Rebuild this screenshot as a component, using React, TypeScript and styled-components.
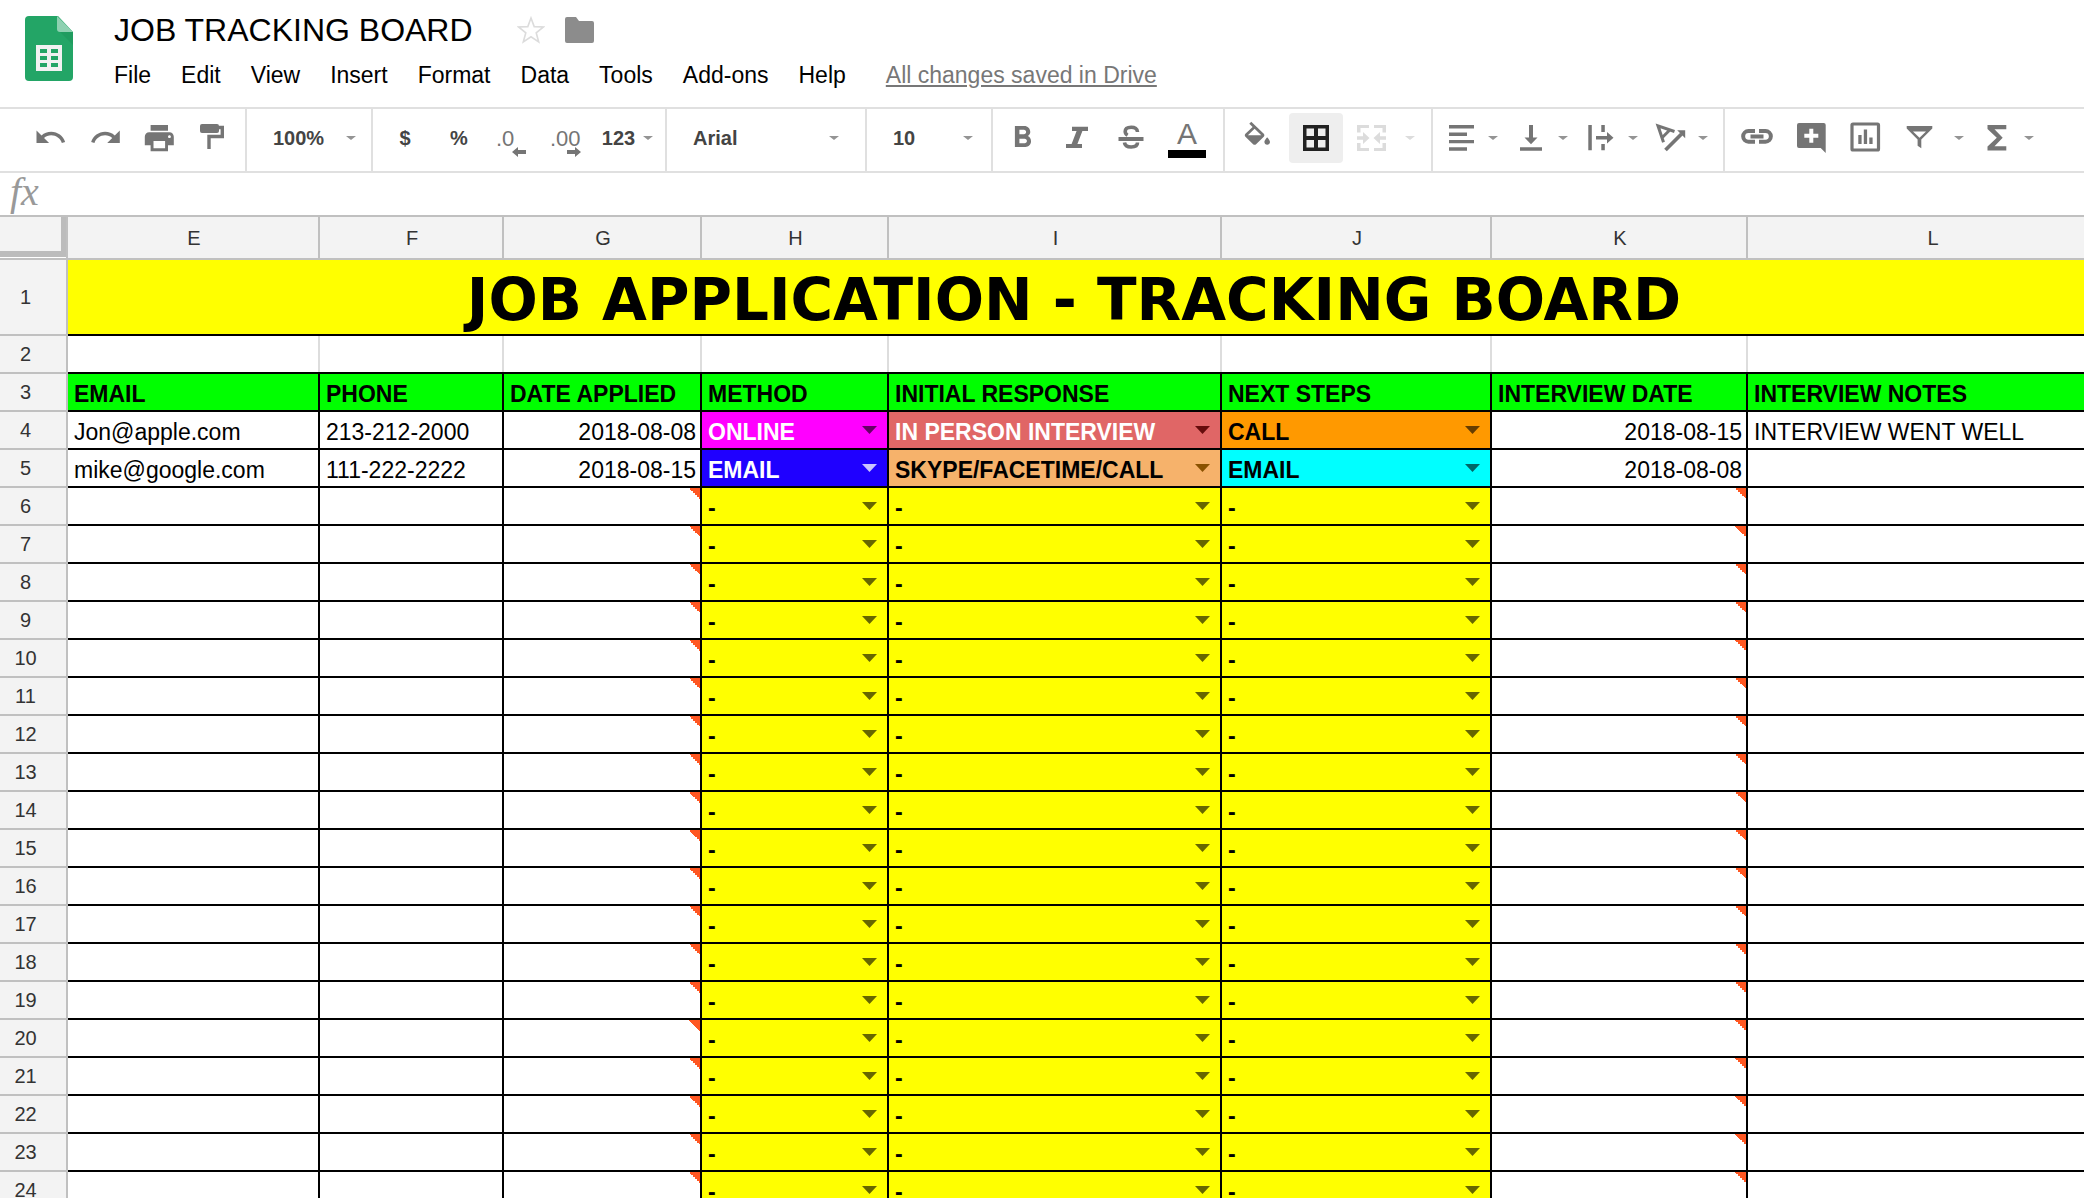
import React from "react";
import styled, { createGlobalStyle } from "styled-components";

const GlobalStyle = createGlobalStyle`
  *, *::before, *::after { box-sizing: border-box; }
  body {
    margin: 0;
    background: #fff;
    color: #000;
    font-family: "Liberation Sans", Arial, sans-serif;
  }
  button, select, input { font: inherit; color: inherit; border: 0; margin: 0; padding: 0; background: none; border-radius: 0; }
`;

const Page = styled.div`
  display: flex;
  flex-direction: column;
  height: 100vh;
  overflow: hidden;
`;

/* ---------- Title area ---------- */

const Header = styled.header`
  display: flex;
  align-items: flex-start;
  gap: 40px;
  height: 107px;
  padding: 10px 24px 0;
`;

const LogoLink = styled.a`
  display: block;
  padding-top: 6px;
  line-height: 0;
`;

const HeaderText = styled.div`
  display: flex;
  flex-direction: column;
  gap: 9px;
`;

const TitleRow = styled.div`
  display: flex;
  align-items: center;
  gap: 20px;
`;

const DocTitle = styled.h1`
  margin: 0 24px 0 0;
  font-size: 32px;
  line-height: 40px;
  font-weight: 400;
`;

const PlainButton = styled.button`
  display: flex;
  line-height: 0;
`;

const MenuBar = styled.nav`
  display: flex;
  align-items: center;
  gap: 30px;
  line-height: 32px;
  font-size: 23px;
`;

const MenuButton = styled.button`
  line-height: 32px;
`;

const SaveLink = styled.a`
  margin-left: 10px;
  color: #777;
`;

/* ---------- Toolbar ---------- */

const Toolbar = styled.div`
  display: flex;
  height: 66px;
  border-top: 2px solid #e0e0e0;
  border-bottom: 2px solid #e0e0e0;
  color: #757575;
`;

const Group = styled.div<{ $start: number; $end?: number; $last?: boolean }>`
  display: flex;
  align-items: flex-start;
  padding: 4px ${(p) => p.$end ?? 0}px 0 ${(p) => p.$start}px;
  border-right: ${(p) => (p.$last ? "0" : "2px solid #e0e0e0")};
`;

const ToolButton = styled.button<{ $active?: boolean; $faded?: boolean; $wide?: number }>`
  display: flex;
  align-items: center;
  justify-content: center;
  width: ${(p) => p.$wide ?? 54}px;
  height: 50px;
  border-radius: 4px;
  background: ${(p) => (p.$active ? "#eee" : "transparent")};
  color: ${(p) => (p.$active ? "#212121" : p.$faded ? "#dcdcdc" : "#757575")};
`;

const DropButton = styled(ToolButton)`
  width: 70px;
  justify-content: flex-start;
  gap: 9px;
  padding-left: 3px;
`;

const TextTool = styled(ToolButton)`
  font-size: 20px;
  font-weight: 700;
  color: #444;
  gap: 8px;
`;

const Spacer = styled.span`
  width: 4px;
`;

const DecimalBox = styled.span`
  display: grid;
  width: 30px;
  margin-right: 4px;
  padding-top: 10px;
  font-size: 22px;
  line-height: 20px;
  text-align: left;

  svg { justify-self: end; margin-top: -2px; }
`;

const ColorBox = styled.span`
  display: grid;
  justify-items: center;
  gap: 3px;
  padding-top: 3px;
  font-size: 30px;
  line-height: 26px;
`;

const ColorBar = styled.span`
  width: 38px;
  height: 8px;
  background: #000;
`;

const SelectBox = styled.label<{ $width: number; $caretGap: number }>`
  display: grid;
  align-items: center;
  width: ${(p) => p.$width}px;
  height: 50px;
  padding-right: ${(p) => p.$caretGap}px;

  > * { grid-area: 1 / 1; }
  > svg { justify-self: end; pointer-events: none; }
`;

const ToolSelect = styled.select`
  appearance: none;
  width: 100%;
  padding-left: 26px;
  font-size: 20px;
  font-weight: 700;
  color: #444;
`;

/* ---------- Formula bar ---------- */

const FormulaBar = styled.div`
  display: flex;
  align-items: flex-start;
  gap: 14px;
  height: 42px;
  padding-left: 10px;
`;

const FormulaLabel = styled.label`
  font-family: "Liberation Serif", serif;
  font-style: italic;
  font-size: 40px;
  line-height: 38px;
  color: #999;
`;

const FormulaInput = styled.input`
  flex: 1;
  height: 40px;
  font-size: 23px;
  outline: none;
`;

/* ---------- Sheet ---------- */

const SheetArea = styled.main`
  flex: 1;
  min-height: 0;
  overflow: hidden;
  border-top: 2px solid #c0c0c0;
`;

const Sheet = styled.table`
  width: max(100%, 2118px);
  table-layout: fixed;
  border-collapse: separate;
  border-spacing: 0;
`;

const Corner = styled.th`
  padding: 0;
  vertical-align: top;
  background: #fff;
  border-right: 2px solid #c0c0c0;
  border-bottom: 2px solid #c0c0c0;
`;

const CornerHandle = styled.div`
  height: 40px;
  background: #f3f3f3;
  border-right: 5px solid #bcbcbc;
  border-bottom: 6px solid #bcbcbc;
`;

const ColumnHead = styled.th`
  height: 43px;
  padding: 0 0 0 2px;
  background: #f3f3f3;
  border-right: 2px solid #c0c0c0;
  border-bottom: 2px solid #c0c0c0;
  font-size: 20px;
  line-height: 24px;
  font-weight: 400;
  color: #333;
`;

const RowHead = styled.th`
  padding: 0 15px 0 0;
  background: #f3f3f3;
  border-right: 2px solid #c0c0c0;
  border-bottom: 2px solid #c0c0c0;
  font-size: 20px;
  line-height: 24px;
  font-weight: 400;
  color: #333;
`;

const Banner = styled.td`
  height: 76px;
  padding: 6px 38px 0 0;
  background: #ff0;
  border-bottom: 2px solid #000;
  font-family: "DejaVu Sans", Verdana, sans-serif;
  font-size: 58px;
  line-height: 60px;
  font-weight: 700;
  text-align: center;
`;

const Cell = styled.td<{ $right?: boolean; $note?: boolean }>`
  height: 38px;
  padding: 4px 4px 0 6px;
  border-right: 2px solid #000;
  border-bottom: 2px solid #000;
  font-size: 23px;
  line-height: 28px;
  white-space: nowrap;
  overflow: hidden;
  text-align: ${(p) => (p.$right ? "right" : "left")};
  ${(p) => p.$note && "background: linear-gradient(to bottom left, #ff5722 50%, transparent 50%) top right / 11px 11px no-repeat;"}
`;

const BlankCell = styled(Cell)`
  border-right: 0;
  box-shadow: inset -2px 0 #ddd;
`;

const FieldCell = styled(Cell)`
  background: #0f0;
  font-weight: 700;
`;

const ChoiceCell = styled(Cell)<{ $bg: string; $ink: string }>`
  padding: 0;
  background: ${(p) => p.$bg};
  color: ${(p) => p.$ink};
`;

const Choice = styled.label`
  display: grid;
  align-items: center;
  height: 36px;
  padding-right: 10px;

  > * { grid-area: 1 / 1; }
  > svg { justify-self: end; pointer-events: none; }
`;

const ChoiceSelect = styled.select`
  appearance: none;
  width: 100%;
  height: 36px;
  padding: 4px 0 0 6px;
  font-size: 23px;
  font-weight: 700;
`;

/* ---------- Icons ---------- */

const Icon = ({ children }: { children: React.ReactNode }) => (
  <svg width="36" height="36" viewBox="0 0 36 36" fill="currentColor" aria-hidden="true">
    {children}
  </svg>
);

const Caret = ({ faded }: { faded?: boolean }) => (
  <svg width="10" height="4" viewBox="0 0 10 4" fill={faded ? "#dcdcdc" : "#949494"} aria-hidden="true">
    <path d="M0 0h10L5 4z" />
  </svg>
);

const CellCaret = ({ color }: { color: string }) => (
  <svg width="15" height="8" viewBox="0 0 15 8" fill={color} aria-hidden="true">
    <path d="M0 0h15L7.500 8z" />
  </svg>
);

const SheetsLogo = () => (
  <svg width="50" height="66" viewBox="0 0 50 66" aria-hidden="true">
    <path d="M5 0h29l15 16v45a4 4 0 0 1-4 4H5a4 4 0 0 1-4-4V4a4 4 0 0 1 4-4z" fill="#23a566" />
    <path d="M33 0l16 16H36a3 3 0 0 1-3-3z" fill="#8ed1b1" />
    <path d="M36 16h13v13z" fill="#1c9457" opacity="0.5" />
    <path
      d="M12 29h26v26H12zM16 33v4h7v-4zm11 0v4h7v-4zM16 40v4h7v-4zm11 0v4h7v-4zM16 47v4h7v-4zm11 0v4h7v-4z"
      fill="#f1f1f1"
      fillRule="evenodd"
    />
  </svg>
);

const Star = () => (
  <svg width="28" height="30" viewBox="0 0 28 30" fill="none" stroke="#dcdcdc" strokeWidth="1.6" aria-hidden="true">
    <path d="M14 3l3.200 8.600 9.300.4-7.300 5.800 2.500 9.200-7.700-5.200L6.300 27l2.500-9.200L1.500 12l9.300-.4z" />
  </svg>
);

const Folder = () => (
  <svg width="30" height="26" viewBox="0 0 30 26" fill="#8c8c8c" aria-hidden="true">
    <path d="M2 0h9l3 4h13a2 2 0 0 1 2 2v18a2 2 0 0 1-2 2H2a2 2 0 0 1-2-2V2a2 2 0 0 1 2-2z" />
  </svg>
);

const Undo = () => (
  <Icon>
    <path transform="translate(.7 .6) scale(1.4)" d="M12.500 8c-2.650 0-5.050.99-6.900 2.600L2 7v9h9l-3.620-3.620c1.390-1.160 3.160-1.880 5.120-1.880 3.540 0 6.550 2.310 7.600 5.500l2.370-.78C21.080 11.030 17.150 8 12.500 8z" />
  </Icon>
);
const Redo = () => (
  <Icon>
    <path transform="translate(2 .6) scale(1.4)" d="M18.400 10.600C16.550 8.990 14.150 8 11.500 8c-4.650 0-8.580 3.030-9.960 7.220L3.900 16c1.050-3.190 4.050-5.500 7.600-5.500 1.950 0 3.730.72 5.120 1.880L13 16h9V7l-3.600 3.600z" />
  </Icon>
);
const Print = () => (
  <Icon>
    <path transform="translate(.9 .7) scale(1.45)" d="M19 8H5c-1.660 0-3 1.340-3 3v6h4v4h12v-4h4v-6c0-1.660-1.340-3-3-3zm-3 11H8v-5h8v5zm3-7c-.55 0-1-.45-1-1s.45-1 1-1 1 .45 1 1-.45 1-1 1zm-1-9H6v4h12V3z" />
  </Icon>
);
const Paint = () => (
  <Icon>
    <rect x="5" y="4" width="19" height="9" rx="2" />
    <path d="M24 7.500h3.300v9H14V29" fill="none" stroke="currentColor" strokeWidth="3.400" />
  </Icon>
);
const Bold = () => (
  <Icon>
    <path transform="translate(-.6 -1.600) scale(1.500)" d="M15.600 11.790c.97-.67 1.650-1.770 1.650-2.790 0-2.260-1.750-4-4-4H7v14h7.040c2.090 0 3.710-1.700 3.710-3.790 0-1.520-.86-2.820-2.150-3.420zM10 7.500h3c.83 0 1.500.67 1.500 1.500s-.67 1.500-1.500 1.500h-3v-3zm3.500 9H10v-3h3.500c.83 0 1.500.67 1.500 1.500s-.67 1.500-1.500 1.500z" />
  </Icon>
);
const Italic = () => (
  <Icon>
    <path d="M13 6.700h16V11h-5.600l-5 13H23v4H7v-4h5.600l5-13H13z" />
  </Icon>
);
const Strike = () => (
  <Icon>
    <path d="M5.500 17h25v4h-25z" />
    <path
      d="M24.500 12c0-3.200-2.600-4.700-6.300-4.700-3.800 0-6 1.700-6 4.200 0 1.800 1 2.900 2.400 3.700M11.500 22.500c.3 3 2.800 4.500 6.700 4.500 3.800 0 6.300-1.500 6.300-4.400"
      fill="none"
      stroke="currentColor"
      strokeWidth="3.600"
    />
  </Icon>
);
const Bucket = () => (
  <Icon>
    <path transform="translate(.6 1.800) scale(1.400 1.350)" d="M16.560 8.940L7.620 0 6.210 1.410l2.380 2.380-5.150 5.150c-.59.59-.59 1.540 0 2.120l5.500 5.500c.29.29.68.44 1.060.44s.77-.15 1.060-.44l5.500-5.500c.59-.58.59-1.530 0-2.120zM5.210 10L10 5.210 14.790 10H5.210zM19 11.500s-2 2.170-2 3.500c0 1.100.9 2 2 2s2-.9 2-2c0-1.330-2-3.500-2-3.500z" />
  </Icon>
);
const Borders = () => (
  <Icon>
    <path fillRule="evenodd" d="M5 5h26v26H5zM8.500 8.500v7.500H16V8.500zm11.500 0v7.500h7.500V8.500zM8.500 20v7.500H16V20zM20 20v7.500h7.500V20z" />
  </Icon>
);
const Merge = () => (
  <Icon>
    <path d="M5 5h12v3H8.500v4.500H5zM22 5h12v7.500h-3.500V8H22zM5 23h3.500v5H17v3H5zM30.500 23H34v8H22v-3h8.500z" />
    <path d="M5 16.200h6V12l6.500 6-6.500 6v-4.200H5zM34 16.200h-6V12l-6.500 6 6.500 6v-4.200h6z" />
  </Icon>
);
const AlignLeft = () => (
  <Icon>
    <path d="M6 5h25v3.500H6zM6 12.500h18V16H6zM6 20h25v3.300H6zM6 27.300h18v3.400H6z" />
  </Icon>
);
const AlignBottom = () => (
  <Icon>
    <path d="M16 5h4v12.500h4.500L18 24.300l-6.500-6.800H16zM7 27.300h22v3.400H7z" />
  </Icon>
);
const Wrap = () => (
  <Icon>
    <path d="M5.300 5h3.500v25.300H5.300zM18.300 5h3.500v7h-3.500zM18.300 24h3.500v6.300h-3.500zM13 16h11v-4l6.500 5.800-6.500 5.800v-4H13z" />
  </Icon>
);
const Rotate = () => (
  <Icon>
    <path d="M21.500 11.500L5 5.800l5.500 16.400M17 9.800L9.300 17.500" fill="none" stroke="currentColor" strokeWidth="3" />
    <path d="M12.500 30L28.500 14" fill="none" stroke="currentColor" strokeWidth="3.800" />
    <path d="M32.200 10.200v8l-8-8z" />
  </Icon>
);
const LinkIcon = () => (
  <Icon>
    <path
      d="M16 11H9.500a5.300 5.300 0 0 0 0 10.700H16M20 11h6.500a5.300 5.300 0 0 1 0 10.700H20M11.500 16.400h13"
      fill="none"
      stroke="currentColor"
      strokeWidth="4"
    />
  </Icon>
);
const Comment = () => (
  <Icon>
    <path d="M6 3h24.700a2 2 0 0 1 2 2v28l-5-5H6a2 2 0 0 1-2-2V5a2 2 0 0 1 2-2z" />
    <path d="M16.300 8.800h4v5h5v4h-5v5h-4v-5h-5v-4h5z" fill="#fff" />
  </Icon>
);
const Chart = () => (
  <Icon>
    <rect x="5" y="4" width="26.500" height="26" rx="1" fill="none" stroke="currentColor" strokeWidth="3.200" />
    <path d="M11.300 15h3.300v9h-3.300zM16.800 9.500h3.300V24h-3.300zM22.300 17.500h3.300V24h-3.300z" />
  </Icon>
);
const Funnel = () => (
  <Icon>
    <path fillRule="evenodd" d="M5.700 6h25.600v2.500L20.300 19.500v8.800l-3.700-2.500v-6.300L5.700 8.500zM12 11.500l6.500 6.300 6.500-6.300z" />
  </Icon>
);
const Sigma = () => (
  <Icon>
    <path d="M27.300 5H8.500v4l9.300 8.800L8.500 26.500v4h18.800v-4.300H15.500l8.200-8.400-8.200-8.500h11.800z" />
  </Icon>
);
const DecimalArrow = ({ right }: { right?: boolean }) => (
  <svg width="14" height="10" viewBox="0 0 14 10" fill="currentColor" aria-hidden="true">
    <path d={right ? "M0 3h8V0l6 5-6 5V7H0z" : "M14 3H6V0L0 5l6 5V7h8z"} />
  </svg>
);

/* ---------- Data ---------- */

const MENUS = ["File", "Edit", "View", "Insert", "Format", "Data", "Tools", "Add-ons", "Help"];
const COLUMNS = [
  { id: "E", width: 252, field: "EMAIL" },
  { id: "F", width: 184, field: "PHONE" },
  { id: "G", width: 198, field: "DATE APPLIED" },
  { id: "H", width: 187, field: "METHOD" },
  { id: "I", width: 333, field: "INITIAL RESPONSE" },
  { id: "J", width: 270, field: "NEXT STEPS" },
  { id: "K", width: 256, field: "INTERVIEW DATE" },
  { id: "L", width: 0, field: "INTERVIEW NOTES" },
];

type Pick = { value: string; bg: string; ink: string; caret: string };
type Row = {
  email: string;
  phone: string;
  applied: string;
  picks: Pick[];
  interview: string;
  notes: string;
};

const NONE: Pick = { value: "-", bg: "#ff0", ink: "#000", caret: "#666600" };
const EMPTY: Row = { email: "", phone: "", applied: "", picks: [NONE, NONE, NONE], interview: "", notes: "" };

const ROWS: Row[] = [
  {
    email: "Jon@apple.com",
    phone: "213-212-2000",
    applied: "2018-08-08",
    picks: [
      { value: "ONLINE", bg: "#f0f", ink: "#fff", caret: "#660066" },
      { value: "IN PERSON INTERVIEW", bg: "#e06666", ink: "#fff", caret: "#660c0c" },
      { value: "CALL", bg: "#ff9900", ink: "#000", caret: "#663d00" },
    ],
    interview: "2018-08-15",
    notes: "INTERVIEW WENT WELL",
  },
  {
    email: "mike@google.com",
    phone: "111-222-2222",
    applied: "2018-08-15",
    picks: [
      { value: "EMAIL", bg: "#1f00ff", ink: "#fff", caret: "#cbc4ff" },
      { value: "SKYPE/FACETIME/CALL", bg: "#f6b26b", ink: "#000", caret: "#8a5200" },
      { value: "EMAIL", bg: "#0ff", ink: "#000", caret: "#006666" },
    ],
    interview: "2018-08-08",
    notes: "",
  },
  ...Array.from({ length: 19 }, () => EMPTY),
];

const CHOICE_FIELDS = ["Method", "Initial response", "Next steps"];

function ToolbarSelect(props: { label: string; value: string; width: number; caretGap: number }) {
  return (
    <SelectBox $width={props.width} $caretGap={props.caretGap}>
      <ToolSelect aria-label={props.label} defaultValue={props.value}>
        <option>{props.value}</option>
      </ToolSelect>
      <Caret />
    </SelectBox>
  );
}

export default function App() {
  return (
    <Page>
      <GlobalStyle />
      <Header>
        <LogoLink href="#" aria-label="Sheets home">
          <SheetsLogo />
        </LogoLink>
        <HeaderText>
          <TitleRow>
            <DocTitle>JOB TRACKING BOARD</DocTitle>
            <PlainButton aria-label="Star"><Star /></PlainButton>
            <PlainButton aria-label="Move to folder"><Folder /></PlainButton>
          </TitleRow>
          <MenuBar>
            {MENUS.map((name) => (
              <MenuButton key={name}>{name}</MenuButton>
            ))}
            <SaveLink href="#">All changes saved in Drive</SaveLink>
          </MenuBar>
        </HeaderText>
      </Header>

      <Toolbar role="toolbar" aria-label="Formatting">
        <Group $start={24} $end={5}>
          <ToolButton aria-label="Undo"><Undo /></ToolButton>
          <ToolButton aria-label="Redo"><Redo /></ToolButton>
          <ToolButton aria-label="Print"><Print /></ToolButton>
          <ToolButton aria-label="Paint format"><Paint /></ToolButton>
        </Group>
        <Group $start={0}>
          <ToolbarSelect label="Zoom" value="100%" width={124} caretGap={15} />
        </Group>
        <Group $start={5} $end={4}>
          <TextTool>$</TextTool>
          <TextTool>%</TextTool>
          <ToolButton aria-label="Decrease decimal places">
            <DecimalBox>.0<DecimalArrow /></DecimalBox>
          </ToolButton>
          <ToolButton aria-label="Increase decimal places">
            <DecimalBox>.00<DecimalArrow right /></DecimalBox>
          </ToolButton>
          <TextTool $wide={67}>123<Caret /></TextTool>
        </Group>
        <Group $start={0}>
          <ToolbarSelect label="Font" value="Arial" width={198} caretGap={26} />
        </Group>
        <Group $start={0}>
          <ToolbarSelect label="Font size" value="10" width={124} caretGap={18} />
        </Group>
        <Group $start={3} $end={7}>
          <ToolButton aria-label="Bold"><Bold /></ToolButton>
          <ToolButton aria-label="Italic"><Italic /></ToolButton>
          <ToolButton aria-label="Strikethrough"><Strike /></ToolButton>
          <ToolButton aria-label="Text color" $wide={58}>
            <ColorBox>A<ColorBar /></ColorBox>
          </ToolButton>
        </Group>
        <Group $start={6} $end={8}>
          <ToolButton aria-label="Fill color"><Bucket /></ToolButton>
          <Spacer />
          <ToolButton aria-label="Borders" $active><Borders /></ToolButton>
          <ToolButton aria-label="Merge cells" $faded><Merge /></ToolButton>
          <ToolButton aria-label="Merge options" $wide={26}><Caret faded /></ToolButton>
        </Group>
        <Group $start={7} $end={3}>
          <DropButton aria-label="Horizontal align"><AlignLeft /><Caret /></DropButton>
          <DropButton aria-label="Vertical align"><AlignBottom /><Caret /></DropButton>
          <DropButton aria-label="Text wrapping"><Wrap /><Caret /></DropButton>
          <DropButton aria-label="Text rotation"><Rotate /><Caret /></DropButton>
        </Group>
        <Group $start={5} $last>
          <ToolButton aria-label="Insert link"><LinkIcon /></ToolButton>
          <ToolButton aria-label="Insert comment"><Comment /></ToolButton>
          <ToolButton aria-label="Insert chart"><Chart /></ToolButton>
          <ToolButton aria-label="Filter"><Funnel /></ToolButton>
          <ToolButton aria-label="Filter views" $wide={26}><Caret /></ToolButton>
          <Spacer />
          <DropButton aria-label="Functions"><Sigma /><Caret /></DropButton>
        </Group>
      </Toolbar>

      <FormulaBar>
        <FormulaLabel htmlFor="formula">fx</FormulaLabel>
        <FormulaInput id="formula" type="text" />
      </FormulaBar>

      <SheetArea>
        <Sheet>
          <colgroup>
            <col width={68} />
            {COLUMNS.map((c) => (
              <col key={c.id} width={c.width || undefined} />
            ))}
          </colgroup>
          <thead>
            <tr>
              <Corner aria-label="Select all"><CornerHandle /></Corner>
              {COLUMNS.map((c) => (
                <ColumnHead key={c.id} scope="col">{c.id}</ColumnHead>
              ))}
            </tr>
          </thead>
          <tbody>
            <tr>
              <RowHead scope="row">1</RowHead>
              <Banner colSpan={8}>JOB APPLICATION - TRACKING BOARD</Banner>
            </tr>
            <tr>
              <RowHead scope="row">2</RowHead>
              {COLUMNS.map((c) => (
                <BlankCell key={c.id} />
              ))}
            </tr>
            <tr>
              <RowHead scope="row">3</RowHead>
              {COLUMNS.map((c) => (
                <FieldCell key={c.id}>{c.field}</FieldCell>
              ))}
            </tr>
            {ROWS.map((row, i) => (
              <tr key={i}>
                <RowHead scope="row">{i + 4}</RowHead>
                <Cell>{row.email}</Cell>
                <Cell>{row.phone}</Cell>
                <Cell $right $note={!row.applied}>{row.applied}</Cell>
                {row.picks.map((pick, j) => (
                  <ChoiceCell key={j} $bg={pick.bg} $ink={pick.ink}>
                    <Choice>
                      <ChoiceSelect aria-label={`${CHOICE_FIELDS[j]}, row ${i + 4}`} defaultValue={pick.value}>
                        <option>{pick.value}</option>
                      </ChoiceSelect>
                      <CellCaret color={pick.caret} />
                    </Choice>
                  </ChoiceCell>
                ))}
                <Cell $right $note={!row.interview}>{row.interview}</Cell>
                <Cell>{row.notes}</Cell>
              </tr>
            ))}
          </tbody>
        </Sheet>
      </SheetArea>
    </Page>
  );
}
